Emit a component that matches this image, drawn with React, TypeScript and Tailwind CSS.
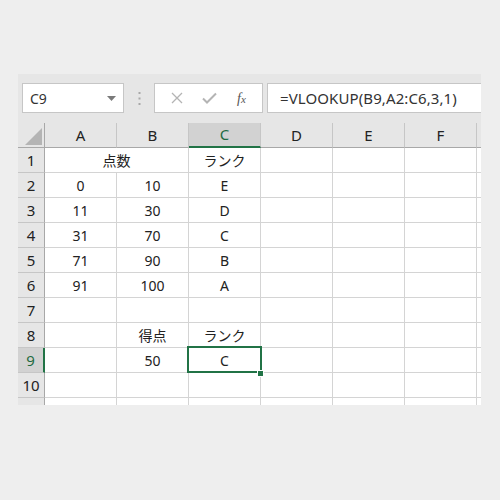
import React from 'react'

const COLS = ['A', 'B', 'C', 'D', 'E', 'F']

// row data: index = row number - 1, values for columns A..F
const ROWS: (string | null)[][] = [
  [null, null, 'ランク', null, null, null],
  ['0', '10', 'E', null, null, null],
  ['11', '30', 'D', null, null, null],
  ['31', '70', 'C', null, null, null],
  ['71', '90', 'B', null, null, null],
  ['91', '100', 'A', null, null, null],
  [null, null, null, null, null, null],
  [null, '得点', 'ランク', null, null, null],
  [null, '50', 'C', null, null, null],
  [null, null, null, null, null, null],
]

const FONT = { fontFamily: '"Noto Sans", "Noto Sans CJK JP", sans-serif' }

function FormulaBar() {
  return (
    <div className="flex items-center h-[30px] pl-[4px]">
      <div className="flex items-center justify-between w-[102px] h-[30px] bg-white border border-[#c6c6c6] pl-[7px] pr-[7px]">
        <span className="text-[14px] text-[#333]">C9</span>
        <svg width="9" height="5" viewBox="0 0 9 5">
          <path d="M0 0 L9 0 L4.5 5 Z" fill="#7a7a7a" />
        </svg>
      </div>
      <div className="w-[30px] flex justify-center">
        <svg width="3" height="13" viewBox="0 0 3 13">
          <rect x="0.5" y="0" width="2" height="2" fill="#a8a8a8" />
          <rect x="0.5" y="5.5" width="2" height="2" fill="#a8a8a8" />
          <rect x="0.5" y="11" width="2" height="2" fill="#a8a8a8" />
        </svg>
      </div>
      <div className="flex items-center w-[109px] h-[30px] bg-white border border-[#c6c6c6]">
        <div className="w-[43px] flex justify-center">
          <svg width="12" height="12" viewBox="0 0 12 12">
            <path d="M1 1 L11 11 M11 1 L1 11" stroke="#b4b4b4" strokeWidth="1.3" />
          </svg>
        </div>
        <div className="w-[23px] flex justify-center">
          <svg width="15" height="12" viewBox="0 0 15 12">
            <path d="M1 6.5 L5 10.5 L14 1.5" stroke="#b4b4b4" strokeWidth="2" fill="none" />
          </svg>
        </div>
        <div className="flex-1 flex justify-center">
          <span className="text-[14px] italic text-[#555]" style={{ fontFamily: '"Liberation Serif", serif' }}>
            f<span className="text-[11px]">x</span>
          </span>
        </div>
      </div>
      <div className="flex items-center flex-1 h-[30px] bg-white border-y border-l border-[#c6c6c6] ml-[4px] pl-[12px]">
        <span className="text-[15px] text-[#333] tracking-[0.1px]">=VLOOKUP(B9,A2:C6,3,1)</span>
      </div>
    </div>
  )
}

function Cell({ text, row, col }: { text: string | null; row: number; col: number }) {
  const selected = row === 9 && col === 2
  return (
    <div className="relative h-[25px] bg-white border-r border-b border-[#d4d4d4] flex items-center justify-center text-[14px] text-[#222]">
      {text}
      {selected && (
        <>
          <div className="absolute z-10 -left-[2px] -top-[2px] w-[75px] h-[27px] border-2 border-[#217346]" />
          <div className="absolute z-10 left-[68px] top-[22px] w-[7px] h-[7px] bg-[#217346] border border-white" />
        </>
      )}
    </div>
  )
}

function Sheet() {
  return (
    <div className="grid grid-cols-[27px_repeat(6,72px)_4px] bg-white">
      {/* header row */}
      <div className="relative h-[25px] bg-[#e6e6e6] border-r border-b border-[#a8a8a8]">
        <svg className="absolute left-[7px] top-[5px]" width="17" height="17" viewBox="0 0 17 17">
          <path d="M17 0 L17 17 L0 17 Z" fill="#b4b4b4" />
        </svg>
      </div>
      {COLS.map((c) => (
        <div
          key={c}
          className={
            c === 'C'
              ? 'h-[25px] flex items-center justify-center bg-[#d2d2d2] border-r border-[#c6c6c6] border-b-2 border-b-[#217346] text-[15px] text-[#1f6b41]'
              : 'h-[25px] flex items-center justify-center bg-[#e6e6e6] border-r border-[#c6c6c6] border-b border-b-[#a8a8a8] text-[15px] text-[#222]'
          }
        >
          {c}
        </div>
      ))}
      <div className="h-[25px] bg-[#e6e6e6] border-b border-[#a8a8a8]" />

      {ROWS.map((r, ri) => {
        const row = ri + 1
        return (
          <React.Fragment key={row}>
            <div
              className={
                row === 9
                  ? 'h-[25px] flex items-center justify-center bg-[#d2d2d2] border-r-2 border-r-[#217346] border-b border-[#c6c6c6] text-[15px] text-[#1f6b41]'
                  : 'h-[25px] flex items-center justify-center bg-[#e6e6e6] border-r border-r-[#a8a8a8] border-b border-[#c6c6c6] text-[15px] text-[#222]'
              }
            >
              {row}
            </div>
            {row === 1 ? (
              <div className="col-span-2 h-[25px] bg-white border-r border-b border-[#d4d4d4] flex items-center justify-center text-[14px] text-[#222]">
                点数
              </div>
            ) : (
              r.slice(0, 2).map((v, ci) => <Cell key={ci} text={v} row={row} col={ci} />)
            )}
            {r.slice(2).map((v, ci) => (
              <Cell key={ci + 2} text={v} row={row} col={ci + 2} />
            ))}
            <div className="h-[25px] bg-white border-b border-[#d4d4d4]" />
          </React.Fragment>
        )
      })}

      {/* partial row 11 */}
      <div className="h-[7px] bg-[#e6e6e6] border-r border-r-[#a8a8a8]" />
      {COLS.map((c) => (
        <div key={c} className="h-[7px] bg-white border-r border-[#d4d4d4]" />
      ))}
      <div className="h-[7px] bg-white" />
    </div>
  )
}

export default function App() {
  return (
    <div className="w-[500px] h-[500px] bg-[#eeeeee] pt-[74px] pl-[18px]" style={FONT}>
      <div className="w-[463px] bg-[#e6e6e6] pt-[9px]">
        <FormulaBar />
        <div className="h-[10px]" />
        <Sheet />
      </div>
    </div>
  )
}
